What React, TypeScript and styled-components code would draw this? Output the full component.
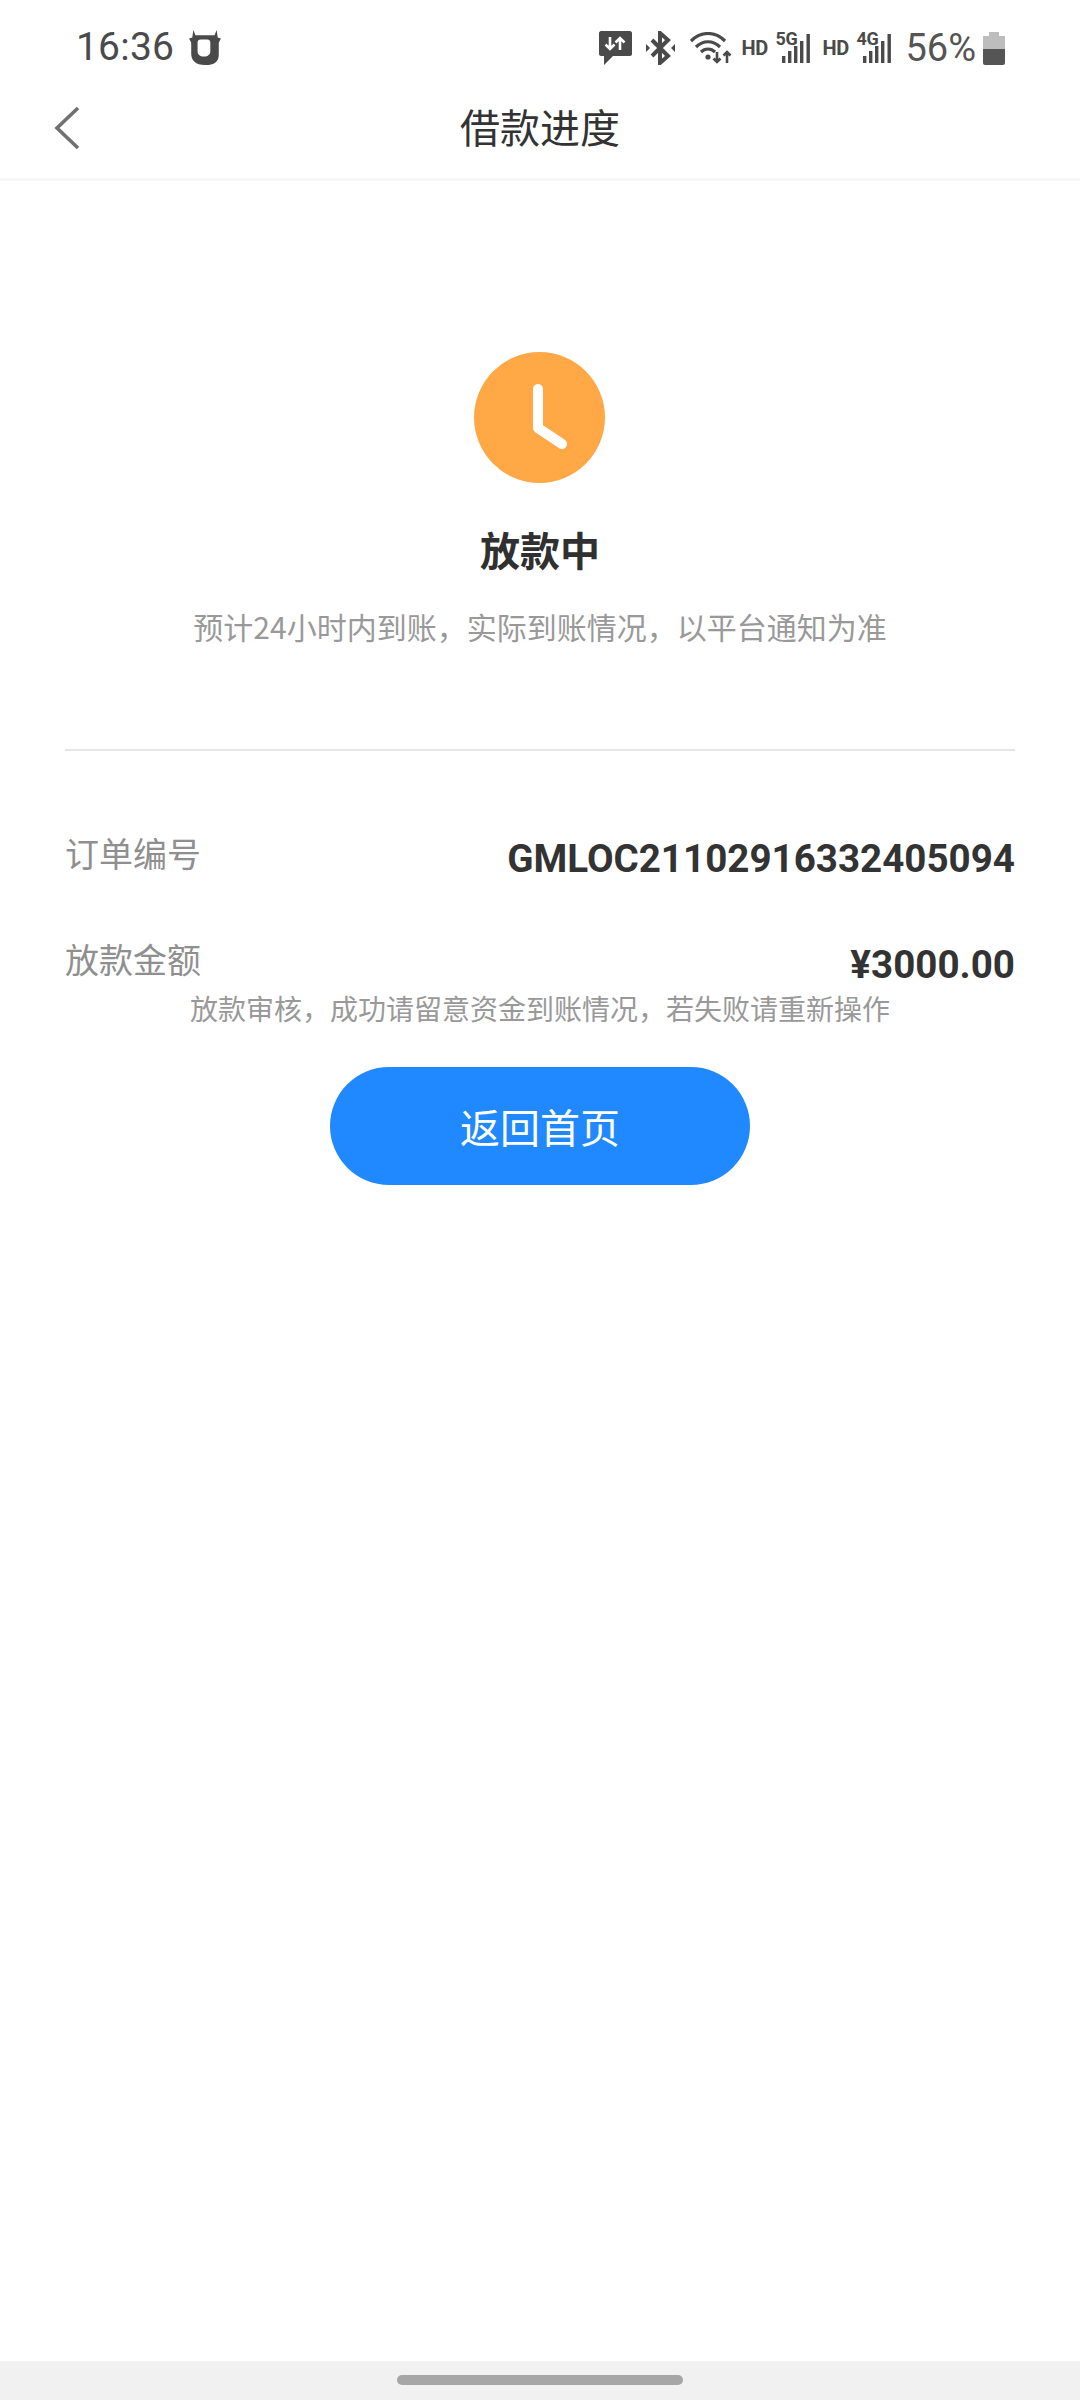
import React from 'react';
import styled, { createGlobalStyle } from 'styled-components';

const GlobalStyle = createGlobalStyle`
  html, body { margin: 0; padding: 0; background: #fff; }
  * { box-sizing: border-box; }
`;

const FONT = `Roboto, "Noto Sans CJK SC", sans-serif`;
const CJK = `"Noto Sans CJK SC", Roboto, sans-serif`;

const Page = styled.div`
  width: 1080px;
  height: 2400px;
  display: flex;
  flex-direction: column;
  background: #fff;
  font-family: ${FONT};
`;

// Status bar
const StatusBar = styled.div`
  height: 74px;
  padding: 27px 75px 0 76px;
  display: flex;
  align-items: flex-start;
  justify-content: space-between;
  color: #4a4a4a;
`;
const StatusLeft = styled.div`
  display: flex;
  align-items: center;
  gap: 15px;
  height: 40px;
`;
const Clock = styled.span`
  font-size: 39px;
  line-height: 40px;
  letter-spacing: 0.2px;
`;
const StatusRight = styled.div`
  display: flex;
  align-items: center;
  height: 44px;
  margin-top: -1px;
`;
const Icon = styled.svg<{ $gap?: number }>`
  display: block;
  margin-left: ${({ $gap }) => $gap ?? 0}px;
  flex: none;
`;
const HdTag = styled.span<{ $gap: number }>`
  margin-left: ${({ $gap }) => $gap}px;
  font-size: 20px;
  font-weight: 700;
  line-height: 24px;
  width: 26px;
  letter-spacing: -0.3px;
`;
const SignalBox = styled.div`
  position: relative;
  margin-left: 8px;
  width: 36px;
  height: 32px;
  flex: none;
`;
const NetTag = styled.span`
  position: absolute;
  left: 0;
  top: -2px;
  font-size: 18px;
  font-weight: 700;
  line-height: 18px;
  letter-spacing: -0.2px;
`;
const Percent = styled.span`
  margin-left: 13px;
  font-size: 38px;
  line-height: 44px;
  color: #555;
`;

// Nav bar
const NavBar = styled.div`
  height: 107px;
  position: relative;
  display: flex;
  align-items: center;
  justify-content: center;
  border-bottom: 3px solid #f6f6f6;
`;
const BackButton = styled.svg`
  position: absolute;
  left: 54px;
  top: 32px;
`;
const NavTitle = styled.h1`
  margin: 0;
  font-family: ${CJK};
  font-size: 40px;
  font-weight: 400;
  color: #333;
`;

// Result block
const Result = styled.section`
  display: flex;
  flex-direction: column;
  align-items: center;
  padding-top: 171px;
`;
const ClockBadge = styled.svg`
  display: block;
  margin-right: 2px;
`;
const StateTitle = styled.h2`
  margin: 41px 0 0;
  font-family: ${CJK};
  font-size: 40px;
  line-height: 50px;
  font-weight: 700;
  color: #303030;
`;
const StateHint = styled.p`
  margin: 30px 0 0;
  font-family: ${CJK};
  font-size: 30px;
  line-height: 44px;
  color: #999;
`;

const Divider = styled.hr`
  margin: 101px 65px 0;
  border: 0;
  height: 2px;
  background: #e6e6e6;
`;

// Detail rows
const Details = styled.div`
  padding: 0 65px;
  margin-top: 80px;
  display: flex;
  flex-direction: column;
  gap: 52px;
`;
const Row = styled.div`
  display: flex;
  align-items: center;
  justify-content: space-between;
  height: 54px;
`;
const RowLabel = styled.span`
  font-family: ${CJK};
  font-size: 34px;
  line-height: 48px;
  margin-bottom: 10px;
  color: #8f8f8f;
`;
const RowValue = styled.span`
  font-size: 38.6px;
  font-weight: 700;
  color: #333;
`;
const Note = styled.p`
  margin: -3px 0 0;
  text-align: center;
  font-family: ${CJK};
  font-size: 28px;
  line-height: 40px;
  color: #999;
`;

const HomeButton = styled.button`
  display: block;
  width: 420px;
  height: 118px;
  margin: 39px auto 0;
  border: 0;
  border-radius: 59px;
  background: #2189ff;
  color: #fff;
  font-family: ${CJK};
  font-size: 40px;
`;

// Gesture bar
const GestureBar = styled.div`
  margin-top: auto;
  height: 39px;
  background: #f1f1f1;
  display: flex;
  justify-content: center;
  padding-top: 14px;
`;
const GesturePill = styled.div`
  width: 286px;
  height: 10px;
  border-radius: 5px;
  background: #a6a6a6;
`;

const Signal = ({ tag }: { tag: string }) => (
  <SignalBox>
    <NetTag>{tag}</NetTag>
    <Icon width="36" height="32" viewBox="0 0 36 32">
      <rect x="7" y="24" width="3.4" height="7" fill="#4a4a4a" />
      <rect x="13" y="19" width="3.4" height="12" fill="#4a4a4a" />
      <rect x="19" y="14" width="3.4" height="17" fill="#4a4a4a" />
      <rect x="25" y="9" width="3.4" height="22" fill="#4a4a4a" />
      <rect x="31.5" y="2" width="3.4" height="29" fill="#4a4a4a" />
    </Icon>
  </SignalBox>
);

const App: React.FC = () => (
  <Page>
    <GlobalStyle />
    <StatusBar>
      <StatusLeft>
        <Clock>16:36</Clock>
        {/* ox head */}
        <Icon width="32" height="35" viewBox="0 0 30 33">
          <path
            fillRule="evenodd"
            d="M4 0l2 5h18l2-5 1 7 3 1-2 4v11c0 7-4 10-13 10S2 29 2 22V12L0 8l3-1zM11 9c-2 0-3 1-3 3v8c0 3 2 5 6 5s6-2 6-5v-8c0-2-1-3-3-3z"
            fill="#4a4a4a"
          />
        </Icon>
      </StatusLeft>
      <StatusRight>
        <Icon width="33" height="35" viewBox="0 0 33 35">
          <path d="M2 0h29c1 0 2 1 2 2v21c0 1-1 2-2 2H14l-9 9v-9H2c-1 0-2-1-2-2V2C0 1 1 0 2 0z" fill="#4a4a4a" />
          <path d="M11 6v12M6.5 13.5l4.500 4.500 4.500-4.500M21 19V7M16.500 11.500L21 7l4.500 4.500" stroke="#fff" strokeWidth="2.6" fill="none" />
        </Icon>
        <Icon $gap={14} width="29" height="34" viewBox="0 0 29 34">
          <path d="M6 9l16 16-8 7V2l8 7L6 25" stroke="#4a4a4a" strokeWidth="4" fill="none" />
          <path d="M0 13l4 4-4 4zM29 13l-4 4 4 4z" fill="#4a4a4a" />
        </Icon>
        <Icon $gap={15} width="42" height="32" viewBox="0 0 42 32">
          <path d="M1 9c10-10 24-10 34 0M6 15c7-7 17-7 24 0M11 20c4-4 10-4 14 0" stroke="#4a4a4a" strokeWidth="3.2" fill="none" />
          <circle cx="18" cy="25" r="2.6" fill="#4a4a4a" />
          <path d="M27 20v10M23.500 26.500L27 30l3.500-3.500M37 31V20M33.500 23.500L37 20l3.500 3.500" stroke="#4a4a4a" strokeWidth="2.6" fill="none" />
        </Icon>
        <HdTag $gap={9}>HD</HdTag>
        <Signal tag="5G" />
        <HdTag $gap={11}>HD</HdTag>
        <Signal tag="4G" />
        <Percent>56%</Percent>
        <Icon $gap={7} width="22" height="33" viewBox="0 0 22 33">
          <rect x="6" y="0" width="10" height="4" fill="#bdbdbd" />
          <rect x="0" y="4" width="22" height="14" fill="#bdbdbd" />
          <path d="M0 17h22v14c0 1-1 2-2 2H2c-1 0-2-1-2-2z" fill="#555" />
        </Icon>
      </StatusRight>
    </StatusBar>

    <NavBar>
      <BackButton width="26" height="44" viewBox="0 0 26 44">
        <path d="M24 2L3 22l21 20" stroke="#707070" strokeWidth="3.6" fill="none" />
      </BackButton>
      <NavTitle>借款进度</NavTitle>
    </NavBar>

    <Result>
      <ClockBadge width="131" height="131" viewBox="0 0 131 131">
        <circle cx="65.500" cy="65.500" r="65.500" fill="#ffa845" />
        <path d="M64 37v39l24 16" stroke="#fff" strokeWidth="10" strokeLinecap="round" strokeLinejoin="round" fill="none" />
      </ClockBadge>
      <StateTitle>放款中</StateTitle>
      <StateHint>预计24小时内到账，实际到账情况，以平台通知为准</StateHint>
    </Result>

    <Divider />

    <Details>
      <Row>
        <RowLabel>订单编号</RowLabel>
        <RowValue>GMLOC21102916332405094</RowValue>
      </Row>
      <Row>
        <RowLabel>放款金额</RowLabel>
        <RowValue>¥3000.00</RowValue>
      </Row>
    </Details>
    <Note>放款审核，成功请留意资金到账情况，若失败请重新操作</Note>
    <HomeButton>返回首页</HomeButton>

    <GestureBar>
      <GesturePill />
    </GestureBar>
  </Page>
);

export default App;
